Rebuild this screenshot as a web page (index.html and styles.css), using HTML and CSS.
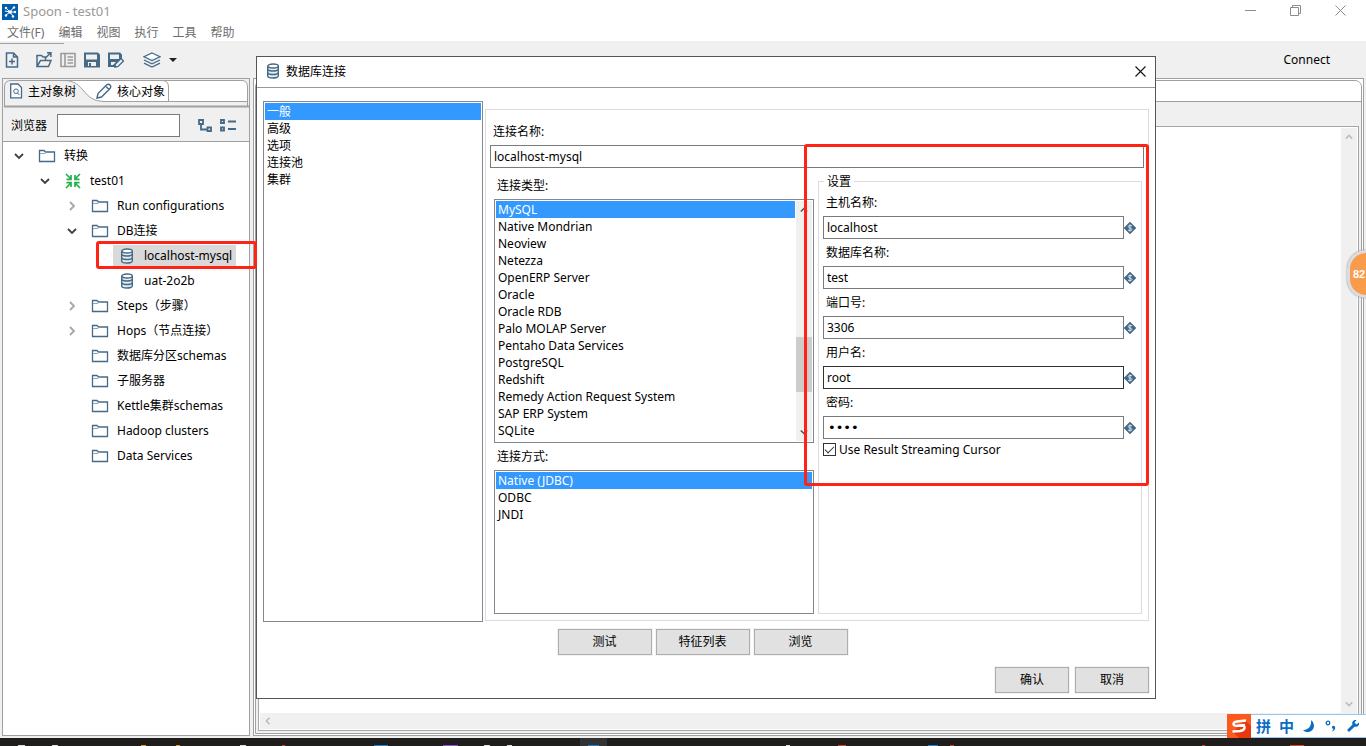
FILE: index.html
```html
<!DOCTYPE html>
<html lang="zh-CN">
<head>
<meta charset="utf-8">
<title>Spoon - test01</title>
<link rel="stylesheet" href="styles.css">
</head>
<body>
<svg class="defs" aria-hidden="true">
  <symbol id="folder" viewBox="0 0 18 14"><path d="M1.500 12.500V1.500H6L7.500 3H16.500V12.500Z" fill="#fff" stroke="#456a88" stroke-width="1.300"/><path d="M2 4.500H7L8 3.500" fill="none" stroke="#8fa6b8"/></symbol>
  <symbol id="db" viewBox="0 0 14 16"><path d="M1.700 3V13C1.700 15.700 12.300 15.700 12.300 13V3" fill="#e6edf2" stroke="#456a88" stroke-width="1.400"/><ellipse cx="7" cy="3" rx="5.300" ry="2" fill="#fff" stroke="#456a88" stroke-width="1.400"/><path d="M1.700 6.500C3 8.500 11 8.500 12.300 6.500M1.700 10C3 12 11 12 12.300 10" fill="none" stroke="#456a88" stroke-width="1.400"/></symbol>
  <symbol id="open" viewBox="0 0 10 10"><path d="M1 3L5 7L9 3" fill="none" stroke="#404040" stroke-width="1.800"/></symbol>
  <symbol id="closed" viewBox="0 0 10 10"><path d="M3 1L7 5L3 9" fill="none" stroke="#a6a6a6" stroke-width="1.800"/></symbol>
  <symbol id="var" viewBox="0 0 12 12"><path d="M6 0L12 6L6 12L0 6Z" fill="#456a88" stroke="#456a88" stroke-width=".6"/><path d="M8 4C7 3 4.300 3 4.300 4.600C4.300 6.300 7.900 5.700 7.900 7.500C7.900 9 5 9 4 8M6 2.500V9.500" fill="none" stroke="#dbe6ee" stroke-width="1"/></symbol>
</svg>
<div class="app">
  <header class="titlebar">
    <svg class="logo" viewBox="0 0 16 16"><rect width="16" height="16" fill="#005daa"/><path d="M4 4L8 8L12 3M8 8H13M8 8L11 12M8 8L4 11M3 7L8 8" stroke="#fff" fill="none"/><g fill="#fff"><circle cx="4" cy="4" r="1.200"/><circle cx="12" cy="3.500" r="1.200"/><circle cx="13" cy="8" r="1.200"/><circle cx="11" cy="12.500" r="1.200"/><circle cx="4" cy="11.500" r="1.200"/><circle cx="8" cy="8" r="1.800"/></g></svg>
    <h1 class="app-title">Spoon - test01</h1>
    <div class="win-buttons">
      <button aria-label="Minimize"><svg viewBox="0 0 11 11"><path d="M0 5.500H11" stroke="#8c8c8c" fill="none"/></svg></button>
      <button aria-label="Restore"><svg viewBox="0 0 11 11"><path d="M.5 2.500H8.500V10.500H.5ZM2.500 2.500V.5H10.500V8.500H8.500" stroke="#8c8c8c" fill="none"/></svg></button>
      <button aria-label="Close"><svg viewBox="0 0 11 11"><path d="M.5.5L10.500 10.500M10.500.5L.5 10.500" stroke="#8c8c8c" fill="none"/></svg></button>
    </div>
  </header>
  <nav class="menubar"><button>文件(F)</button><button>编辑</button><button>视图</button><button>执行</button><button>工具</button><button>帮助</button></nav>
  <div class="toolbar">
    <button aria-label="New"><svg viewBox="0 0 16 16"><path d="M2.500 1H9.500L13.500 5V15H2.500ZM9.500 1V5H13.500M8 6.500V12.500M5 9.500H11" fill="none" stroke="#456a88" stroke-width="1.500"/></svg></button>
    <button class="spaced" aria-label="Open"><svg viewBox="0 0 16 16"><path d="M1 14.500V3.500H5.500L7 5H9.500V8M1 14.500L4.500 8.500H15L12.500 14.500ZM10 5.500L14.500 1M11 .8H14.900V5" fill="none" stroke="#456a88" stroke-width="1.500"/></svg></button>
    <button aria-label="Explore"><svg viewBox="0 0 16 16"><path d="M1 1.500H15V14.500H1ZM5 1V15M7.500 5H13M7.500 8H13M7.500 11H13" fill="none" stroke="#9b9b9b" stroke-width="1.600"/></svg></button>
    <button aria-label="Save"><svg viewBox="0 0 16 16"><path d="M0 .5H14L16 2.500V15.500H0Z" fill="#456a88"/><path d="M2 2.500H13V7.500H2ZM4 10H12V14H7V11H5V14H4Z" fill="#f0f0f0"/></svg></button>
    <button aria-label="Save as"><svg viewBox="0 0 16 16"><path d="M0 .5H12L14 2.500V7L7 15H0Z" fill="#456a88"/><path d="M2 2.500H11V7H2ZM3 10H8L5 13H3Z" fill="#f0f0f0"/><path d="M7.500 12L13 6.500L15.500 9L10 14.500L7 15.200Z" fill="#f0f0f0" stroke="#456a88" stroke-width="1.300"/></svg></button>
    <button class="layers" aria-label="Perspective"><svg viewBox="0 0 18 16"><path d="M9 1L17 4.700L9 8.500L1 4.700Z" fill="#fff" stroke="#456a88" stroke-width="1.200"/><path d="M1 8L9 11.800L17 8M1 11.200L9 15L17 11.200" fill="none" stroke="#456a88" stroke-width="1.300"/></svg></button>
    <button class="drop" aria-label="Choose perspective"><svg viewBox="0 0 8 4"><path d="M0 0H8L4 4Z" fill="#202020"/></svg></button>
    <button class="connect">Connect</button>
  </div>
  <main class="workspace">
    <aside class="explorer">
      <div class="side-tabs">
        <svg class="tab-shape" viewBox="0 0 245 28"><path d="M1 22V7Q1 1 7 1H238Q244 1 244 7V22Z" fill="#fff"/><path d="M1 28V7Q1 1 7 1H60C82 1 77 21 101 21H244V28Z" fill="#f0f0f0"/><path d="M.5 26V7Q.5.5 7 .5H238Q243.500.5 243.500 7V26M60 .5C82 .5 77 21.500 101 21.500H244M158 .5Q164.500.5 164.500 7V21.500" fill="none" stroke="#a0a0a0"/><path d="M0 26.500H245" stroke="#a0a0a0" stroke-width="2"/></svg>
        <button class="side-tab first"><svg viewBox="0 0 14 16"><path d="M1.700 1H9L12.500 4.500V14.800H1.700Z" fill="#fff" stroke="#456a88" stroke-width="1.300"/><circle cx="7" cy="8.200" r="2.300" fill="none" stroke="#456a88"/><path d="M8.500 10L10.500 12" stroke="#456a88"/></svg>主对象树</button>
        <button class="side-tab second"><svg viewBox="0 0 16 16"><path d="M1 15L2 10.500L10.500 2Q12.500 .5 14 2Q15.500 3.500 14 5.500L5.500 14ZM9.500 3L13 6.500" fill="#fff" stroke="#456a88" stroke-width="1.400"/></svg>核心对象</button>
      </div>
      <div class="search">
        <label for="browse">浏览器</label><input id="browse" type="text">
        <button aria-label="Expand all"><svg viewBox="0 0 16 16"><path d="M2 2H6V6H2ZM10.500 9.500H14V13H10.500ZM4 6.500V11.500H10" fill="none" stroke="#456a88" stroke-width="1.800"/></svg></button>
        <button aria-label="Collapse all"><svg viewBox="0 0 16 16"><path d="M1 2H4V5H1ZM1 9.500H4V12.500H1ZM8 3.500H16M8 11H16" fill="none" stroke="#456a88" stroke-width="1.800"/></svg></button>
      </div>
      <ul class="tree" role="tree">
        <li class="row l0"><svg class="tw"><use href="#open"/></svg><svg class="fo"><use href="#folder"/></svg><span>转换</span></li>
        <li class="row l1"><svg class="tw"><use href="#open"/></svg><svg class="fo" viewBox="0 0 18 16"><path d="M2 1L7 6M7 2V6.300H2.500M16 1L11 6M11 2V6.300H15.500M2 15L7 10M2.500 9.700H7V14M16 15L11 10M15.500 9.700H11V14" fill="none" stroke="#23b14d" stroke-width="1.700"/></svg><span>test01</span></li>
        <li class="row l2"><svg class="tw"><use href="#closed"/></svg><svg class="fo"><use href="#folder"/></svg><span>Run configurations</span></li>
        <li class="row l2"><svg class="tw"><use href="#open"/></svg><svg class="fo"><use href="#folder"/></svg><span>DB连接</span></li>
        <li class="row l3 marked"><div class="picked"><svg class="fo"><use href="#db"/></svg><span>localhost-mysql</span></div></li>
        <li class="row l3"><div class="item"><svg class="fo"><use href="#db"/></svg><span>uat-2o2b</span></div></li>
        <li class="row l2"><svg class="tw"><use href="#closed"/></svg><svg class="fo"><use href="#folder"/></svg><span>Steps（步骤）</span></li>
        <li class="row l2"><svg class="tw"><use href="#closed"/></svg><svg class="fo"><use href="#folder"/></svg><span>Hops（节点连接）</span></li>
        <li class="row l2"><i class="tw"></i><svg class="fo"><use href="#folder"/></svg><span>数据库分区schemas</span></li>
        <li class="row l2"><i class="tw"></i><svg class="fo"><use href="#folder"/></svg><span>子服务器</span></li>
        <li class="row l2"><i class="tw"></i><svg class="fo"><use href="#folder"/></svg><span>Kettle集群schemas</span></li>
        <li class="row l2"><i class="tw"></i><svg class="fo"><use href="#folder"/></svg><span>Hadoop clusters</span></li>
        <li class="row l2"><i class="tw"></i><svg class="fo"><use href="#folder"/></svg><span>Data Services</span></li>
      </ul>
    </aside>
    <section class="editor">
      <div class="editor-frame">
        <div class="editor-tabs"></div>
        <div class="canvas">
          <div class="sheet"></div>
          <div class="vbar"><svg viewBox="0 0 10 10"><path d="M1 7L5 3L9 7" fill="none" stroke="#bdbdbd" stroke-width="2"/></svg><svg viewBox="0 0 10 10"><path d="M1 3L5 7L9 3" fill="none" stroke="#bdbdbd" stroke-width="2"/></svg></div>
          <div class="hbar"><svg viewBox="0 0 10 10"><path d="M7 1L3 5L7 9" fill="none" stroke="#bdbdbd" stroke-width="2"/></svg></div>
        </div>
      </div>
    </section>
  </main>
  <footer class="taskbar"><svg viewBox="0 0 1366 8"><path d="M580 0H607V8H580Z" fill="#333"/><path d="M18 7.500h7M52 7.500h6M240 7.500h6M484 7.500h6M507 7.500h5M786 7.500h4" stroke="#e0e0e0"/><path d="M141 7.500h5M176 7.500h4" stroke="#e0a320"/><path d="M374 7.500h14M588 7.500h11M928 7.500h10" stroke="#1687e0"/><path d="M443 7.500h15" stroke="#9250dc"/><path d="M282 7.500h3M838 7.500h8M950 7.500h4M1290 7.500h14M1202 7.500h3" stroke="#e0452c"/></svg></footer>
</div>

<div class="dialog" role="dialog" aria-labelledby="dlg-title">
  <div class="dlg-head"><svg class="fo"><use href="#db"/></svg><h2 id="dlg-title">数据库连接</h2><button aria-label="Close"><svg viewBox="0 0 11 11"><path d="M.5.5L10.500 10.500M10.500.5L.5 10.500" stroke="#111" fill="none" stroke-width="1.100"/></svg></button></div>
  <div class="dlg-main">
    <ul class="list categories" role="listbox" aria-label="类别"><li class="on">一般</li><li>高级</li><li>选项</li><li>连接池</li><li>集群</li></ul>
    <div class="general">
      <label class="name-label" for="cname">连接名称:</label>
      <input class="name-field" id="cname" type="text" value="localhost-mysql">
      <div class="columns">
        <div class="types">
          <h3>连接类型:</h3>
          <div class="list scroller">
            <ul role="listbox" aria-label="连接类型"><li class="on">MySQL</li><li>Native Mondrian</li><li>Neoview</li><li>Netezza</li><li>OpenERP Server</li><li>Oracle</li><li>Oracle RDB</li><li>Palo MOLAP Server</li><li>Pentaho Data Services</li><li>PostgreSQL</li><li>Redshift</li><li>Remedy Action Request System</li><li>SAP ERP System</li><li>SQLite</li></ul>
            <div class="track"><svg viewBox="0 0 10 10"><path d="M1 7L5 3L9 7" fill="none" stroke="#505050" stroke-width="1.800"/></svg><div class="thumb"></div><svg viewBox="0 0 10 10"><path d="M1 3L5 7L9 3" fill="none" stroke="#505050" stroke-width="1.800"/></svg></div>
          </div>
          <h3 class="access">连接方式:</h3>
          <ul class="list methods" role="listbox" aria-label="连接方式"><li class="on">Native (JDBC)</li><li>ODBC</li><li>JNDI</li></ul>
        </div>
        <fieldset class="settings">
          <legend>设置</legend>
          <label for="host">主机名称:</label><div class="field"><input id="host" type="text" value="localhost"><svg><use href="#var"/></svg></div>
          <label for="dbn">数据库名称:</label><div class="field"><input id="dbn" type="text" value="test"><svg><use href="#var"/></svg></div>
          <label for="port">端口号:</label><div class="field"><input id="port" type="text" value="3306"><svg><use href="#var"/></svg></div>
          <label for="user">用户名:</label><div class="field active"><input id="user" type="text" value="root"><svg><use href="#var"/></svg></div>
          <label for="pass">密码:</label><div class="field last"><input id="pass" type="password" value="root"><svg><use href="#var"/></svg></div>
          <div class="check"><input id="cursor" type="checkbox" checked><label for="cursor">Use Result Streaming Cursor</label></div>
        </fieldset>
      </div>
      <div class="highlight"></div>
    </div>
  </div>
  <div class="actions"><button>测试</button><button>特征列表</button><button>浏览</button></div>
  <div class="confirm"><button>确认</button><button>取消</button></div>
</div>

<div class="badge">82</div>
<div class="ime">
  <svg class="sogou" viewBox="0 0 24 24"><path d="M0 0H24V24H0Z" fill="#fa5a1e"/><path d="M18 6L24 12V24H12L6 18Z" fill="#e8380d"/><path d="M19 6.500L10 7.500Q6 8 6.500 10.500Q7 12 10 11.800L15 11.500Q18 11.500 17.500 14Q17 16.500 13 17L5.500 17.500M10 11.800L18 11" fill="none" stroke="#fff" stroke-width="2.400"/></svg>
  <span>拼</span><span>中</span>
  <svg viewBox="0 0 14 14"><path d="M9 1C15 6 11 14 4.500 13Q2 12.500 1 11C6 11.500 10 7 9 1Z" fill="#0a6cc4"/></svg>
  <svg viewBox="0 0 14 14"><circle cx="4" cy="4" r="1.800" fill="none" stroke="#0a6cc4" stroke-width="1.300"/><path d="M8 7.500Q9.500 6 11 7.500Q12 11 8 12.500L9.500 10Q7.500 9.500 8 7.500Z" fill="#0a6cc4"/></svg>
  <svg viewBox="0 0 14 14"><path d="M12.800 3.500L10.500 5.500L8.500 3.500L10.500 1.200C7.500.3 5.500 3 6.500 5.500L1 11L3 13L8.500 7.700C11.500 8.500 14 6 12.800 3.500Z" fill="#0a6cc4"/></svg>
</div>
</body>
</html>
```

FILE: styles.css
```css
*, *::before, *::after { box-sizing: border-box; }
body, h1, h2, h3, ul { margin: 0; padding: 0; }
body { font: 12px/17px "Noto Sans", "Noto Sans CJK SC", sans-serif; color: #000; background: #f0f0f0; }
h1, h2, h3 { font-size: 12px; font-weight: 400; }
ul { list-style: none; }
button, input { font: inherit; color: inherit; }
button { padding: 0; border: 0; background: none; }
input { margin: 0; padding: 0 3px; border: 1px solid #7a7a7a; border-radius: 0; background: #fff; outline: 0; min-width: 0; }
svg { display: block; flex: none; }
.defs { position: absolute; width: 0; height: 0; }
.fo { width: 18px; height: 16px; }
.app { display: flex; flex-direction: column; height: 100vh; min-height: 740px; overflow: hidden; }

.titlebar { display: flex; align-items: center; height: 23px; padding: 0 20px 0 2px; background: #fff; color: #999; }
.logo { width: 16px; height: 16px; margin-right: 5px; }
.app-title { font-size: 13px; }
.win-buttons { display: flex; margin-left: auto; gap: 34px; padding-bottom: 3px; }
.win-buttons svg { width: 11px; height: 11px; }
.menubar { display: flex; gap: 14px; height: 18px; padding-left: 7px; background: #fff; color: #6d6d6d; }
.toolbar { display: flex; align-items: center; gap: 8px; height: 37px; padding: 0 36px 0 4px; position: relative; }
.toolbar::before { content: ""; position: absolute; left: 0; top: 2px; width: 64px; border-top: 1px solid #a0a0a0; }
.toolbar svg { width: 16px; height: 16px; }
.toolbar .spaced { margin-left: 8px; }
.toolbar .layers { margin-left: 11px; }
.toolbar .layers svg { width: 18px; }
.toolbar .drop svg { width: 8px; height: 4px; }
.toolbar .connect { margin-left: auto; }

.workspace { display: flex; flex: 1; gap: 3px; padding: 0 2px 2px; min-height: 0; }
.explorer { display: flex; flex-direction: column; width: 248px; border: 1px solid #a0a0a0; background: #fff; }
.side-tabs { position: relative; display: flex; gap: 20px; height: 29px; padding: 1px 1px 0; background: #f0f0f0; }
.tab-shape { position: absolute; left: 1px; top: 1px; width: 245px; height: 28px; }
.side-tab { position: relative; display: flex; align-items: center; gap: 5px; height: 22px; }
.side-tab.first { padding-left: 5px; }
.side-tab svg { width: 14px; height: 16px; }
.side-tab.second svg { width: 16px; }
.search { display: flex; align-items: center; height: 34px; padding: 2px 0 0 8px; background: #f0f0f0; border-bottom: 1px solid #a0a0a0; }
.search label { white-space: nowrap; }
.search input { width: 123px; height: 23px; margin-left: 10px; margin-right: 17px; }
.search button { margin-right: 7px; }
.search svg { width: 16px; height: 16px; }
.tree { padding-top: 1px; }
.row { position: relative; display: flex; align-items: center; height: 25px; white-space: nowrap; }
.tw { width: 10px; height: 10px; margin-right: 14px; flex: none; }
.row .fo { margin-right: 8px; }
.row use { height: 14px; }
.l0 { padding-left: 11px; }
.l1 { padding-left: 37px; }
.l2 { padding-left: 64px; }
.l3 { padding-left: 110px; }
.picked, .item { display: flex; align-items: center; height: 22px; padding: 0 4px 0 5px; }
.picked { background: #d9d9d9; }
.l3 use { height: 16px; }
.marked::after { content: ""; position: absolute; left: 93px; right: -8px; top: -2px; height: 28px; border: 3px solid #ff2316; border-radius: 3px; z-index: 5; }

.editor { flex: 1; min-width: 0; padding: 1px; border: 1px solid #a0a0a0; background: #fff; }
.editor-frame { display: flex; flex-direction: column; height: 100%; padding: 0 2px 2px; border: 1px solid #a0a0a0; border-radius: 7px 7px 0 0; background: #f0f0f0; overflow: hidden; }
.editor-tabs { height: 21px; margin: 0 -2px 24px; border-bottom: 1px solid #a0a0a0; background: #fff; flex: none; }
.canvas { display: grid; grid-template: 1fr 16px / 1fr 16px; flex: 1; padding: 1px; border: 1px solid #a5a5ab; background: #fff; }
.vbar { display: flex; flex-direction: column; align-items: center; justify-content: space-between; padding: 5px 0; background: #f0f0f0; }
.hbar { grid-column: 1 / 3; display: flex; align-items: center; padding-left: 4px; background: #f0f0f0; }
.vbar svg, .hbar svg { width: 8px; height: 8px; }
.taskbar { height: 8px; background: #1f1e1d; flex: none; }
.taskbar svg { width: 1366px; height: 8px; }

.dialog { position: absolute; left: 256px; right: 210px; top: 56px; min-height: 643px; display: flex; flex-direction: column; border: 1px solid #555; background: #fff; }
.dlg-head { display: flex; align-items: center; height: 31px; padding: 0 9px 2px 7px; border-bottom: 1px solid #999; }
.dlg-head h2 { margin-left: 4px; }
.dlg-head button { margin-left: auto; }
.dlg-head button svg { width: 11px; height: 11px; }
.dlg-main { display: flex; gap: 2px; height: 521px; margin: 13px 6px 0; }
.list { border: 1px solid #828790; padding: 1px; background: #fff; }
.list li { height: 17px; padding: 0 2px; white-space: nowrap; }
.list .on { background: #3399ff; color: #fff; }
.categories { width: 220px; }
.general { position: relative; flex: 1; display: flex; flex-direction: column; margin: 8px 0 1px; padding: 13px 4px 6px; border: 1px solid #dcdcdc; }
.name-label { padding-left: 3px; height: 22px; }
.name-field { height: 23px; flex: none; }
.columns { display: flex; gap: 4px; flex: 1; padding: 5px 2px 0 4px; min-height: 0; }
.types { flex: 1; display: flex; flex-direction: column; padding-top: 4px; }
.types h3 { height: 22px; padding-left: 3px; }
.types .access { padding-top: 5px; height: 27px; }
.scroller { display: flex; height: 244px; }
.scroller ul { flex: 1; margin-right: 1px; }
.track { display: flex; flex-direction: column; align-items: center; width: 16px; padding: 5px 0; background: #f0f0f0; }
.track svg { width: 8px; height: 8px; }
.thumb { width: 16px; height: 55px; margin: auto 0 36px; background: #cdcdcd; }
.methods { flex: 1; }
.settings { width: 324px; margin: 0; padding: 4px 5px 0 4px; border: 1px solid #dcdcdc; min-width: 0; }
.settings legend { margin-left: 1px; padding: 0 3px; }
.settings > label { display: block; height: 22px; padding-left: 3px; }
.field { display: flex; align-items: center; height: 23px; margin-bottom: 5px; }
.field input { width: 301px; height: 23px; }
.field input[type="password"] { padding-left: 4px; font: 13px/17px "DejaVu Sans", sans-serif; }
.field.last { margin-bottom: 2px; }
.field svg { width: 12px; height: 12px; }
.field.active input { border-color: #333; }
.check { display: flex; align-items: center; gap: 3px; }
.check input { appearance: none; width: 13px; height: 13px; padding: 0; border: 1px solid #333; display: grid; place-items: center; }
.check input:checked::before { content: ""; width: 9px; height: 5px; border: solid #333; border-width: 0 0 1px 1px; transform: rotate(-45deg); margin-bottom: 3px; }
.highlight { position: absolute; left: 318px; right: -1px; top: 34px; height: 342px; border: 3px solid #ff2316; border-radius: 3px; pointer-events: none; }
.actions { display: flex; justify-content: center; gap: 4px; padding: 7px 7px 0 0; }
.actions button, .confirm button { height: 26px; padding-bottom: 2px; border: 1px solid #adadad; background: #e1e1e1; outline: 1px solid #f3f3f3; }
.actions button { width: 94px; }
.confirm { display: flex; justify-content: flex-end; gap: 6px; padding: 12px 6px 0; }
.confirm button { width: 74px; }

.badge { position: absolute; right: 0; top: 250px; width: 19px; height: 48px; padding-left: 3px; border: 3px solid #dcdcdc; border-right: 0; border-radius: 24px 0 0 24px / 24px 0 0 24px; background: #f89b4b; color: #fff; font: bold 11px/42px "Liberation Sans", sans-serif; box-shadow: 0 0 2px #888; overflow: hidden; }
.ime { position: absolute; right: 0; top: 714px; width: 139px; height: 24px; display: flex; align-items: center; gap: 8px; background: #fff; border: solid #9cc4f4; border-width: 1px 0; color: #0a6cc4; font: bold 15px/22px "Noto Sans CJK SC", sans-serif; }
.ime svg { width: 14px; height: 14px; }
.ime .sogou { width: 24px; height: 24px; margin-right: -3px; }
```
